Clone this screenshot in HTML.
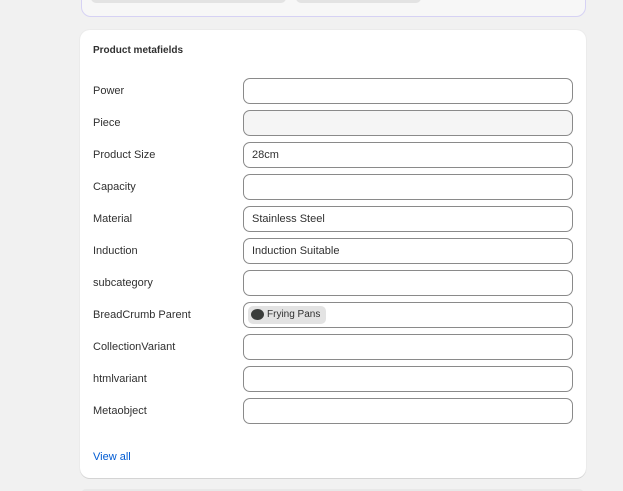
<!DOCTYPE html><html><head><style>
html,body{margin:0;width:623px;height:491px;overflow:hidden}
body{background:#f1f1f1;font-family:"Liberation Sans",sans-serif;position:relative}
.top{position:absolute;left:81px;top:-10px;width:503px;height:25px;background:#f7f7f7;border:1px solid #d6d2f4;border-radius:10px}
.pill{position:absolute;top:-10px;height:13px;background:#e3e3e3;border-radius:5px}
.card{position:absolute;left:80px;top:30px;width:506px;height:448px;background:#fff;border-radius:10px;box-shadow:0 1px 0 #d4d4d4,0 0 0 1px #ebebeb}
h1{position:absolute;left:13px;top:15px;margin:0;font-size:10px;font-weight:bold;color:#303030}
.lab{position:absolute;left:13px;font-size:11px;color:#303030}
.in{position:absolute;left:163px;width:328px;height:24px;border:1px solid #8a8a8a;border-radius:7px;box-sizing:content-box;font-size:11px;color:#303030;line-height:24px}
.in span.t{margin-left:8px}
.va{position:absolute;left:13px;top:421px;font-size:11px;color:#005bd3}
.bot{position:absolute;left:81px;top:489px;width:503px;height:10px;background:#e8e8e8;border-radius:8px}
</style></head><body>
<div class="top"></div>
<div class="pill" style="left:91px;width:195px"></div>
<div class="pill" style="left:296px;width:125px"></div>
<div class="card">
<h1>Product metafields</h1>
<div class="lab" style="top:55px">Power</div><div class="in" style="top:48px"></div>
<div class="lab" style="top:87px">Piece</div><div class="in" style="top:80px;background:#f5f5f5"></div>
<div class="lab" style="top:119px">Product Size</div><div class="in" style="top:112px"><span class="t">28cm</span></div>
<div class="lab" style="top:151px">Capacity</div><div class="in" style="top:144px"></div>
<div class="lab" style="top:183px">Material</div><div class="in" style="top:176px"><span class="t">Stainless Steel</span></div>
<div class="lab" style="top:215px">Induction</div><div class="in" style="top:208px"><span class="t">Induction Suitable</span></div>
<div class="lab" style="top:247px">subcategory</div><div class="in" style="top:240px"></div>
<div class="lab" style="top:279px">BreadCrumb Parent</div><div class="in" style="top:272px"><span style="position:absolute;left:4px;top:3px;height:18px;width:78px;background:#e3e3e3;border-radius:5px;line-height:18px;font-size:10px"><span style="position:absolute;left:3px;top:3px;width:13px;height:11px;background:#3a3d3b;border-radius:50%"></span><span style="margin-left:19px">Frying Pans</span></span></div>
<div class="lab" style="top:311px">CollectionVariant</div><div class="in" style="top:304px"></div>
<div class="lab" style="top:343px">htmlvariant</div><div class="in" style="top:336px"></div>
<div class="lab" style="top:375px">Metaobject</div><div class="in" style="top:368px"></div>
<div class="va">View all</div>
</div>
<div class="bot"></div>
</body></html>
